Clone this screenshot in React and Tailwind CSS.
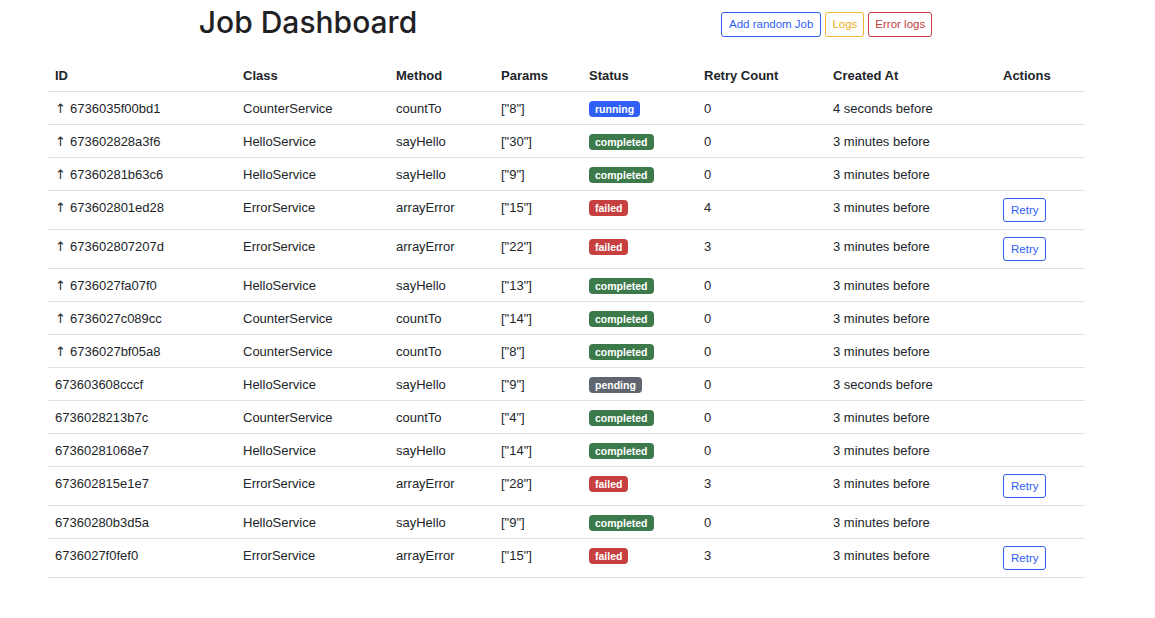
const jobs = [
  { id: "6736035f00bd1", up: true, cls: "CounterService", method: "countTo", params: '["8"]', status: "running", retry: 0, created: "4 seconds before" },
  { id: "673602828a3f6", up: true, cls: "HelloService", method: "sayHello", params: '["30"]', status: "completed", retry: 0, created: "3 minutes before" },
  { id: "67360281b63c6", up: true, cls: "HelloService", method: "sayHello", params: '["9"]', status: "completed", retry: 0, created: "3 minutes before" },
  { id: "673602801ed28", up: true, cls: "ErrorService", method: "arrayError", params: '["15"]', status: "failed", retry: 4, created: "3 minutes before" },
  { id: "673602807207d", up: true, cls: "ErrorService", method: "arrayError", params: '["22"]', status: "failed", retry: 3, created: "3 minutes before" },
  { id: "6736027fa07f0", up: true, cls: "HelloService", method: "sayHello", params: '["13"]', status: "completed", retry: 0, created: "3 minutes before" },
  { id: "6736027c089cc", up: true, cls: "CounterService", method: "countTo", params: '["14"]', status: "completed", retry: 0, created: "3 minutes before" },
  { id: "6736027bf05a8", up: true, cls: "CounterService", method: "countTo", params: '["8"]', status: "completed", retry: 0, created: "3 minutes before" },
  { id: "673603608cccf", up: false, cls: "HelloService", method: "sayHello", params: '["9"]', status: "pending", retry: 0, created: "3 seconds before" },
  { id: "6736028213b7c", up: false, cls: "CounterService", method: "countTo", params: '["4"]', status: "completed", retry: 0, created: "3 minutes before" },
  { id: "67360281068e7", up: false, cls: "HelloService", method: "sayHello", params: '["14"]', status: "completed", retry: 0, created: "3 minutes before" },
  { id: "673602815e1e7", up: false, cls: "ErrorService", method: "arrayError", params: '["28"]', status: "failed", retry: 3, created: "3 minutes before" },
  { id: "67360280b3d5a", up: false, cls: "HelloService", method: "sayHello", params: '["9"]', status: "completed", retry: 0, created: "3 minutes before" },
  { id: "6736027f0fef0", up: false, cls: "ErrorService", method: "arrayError", params: '["15"]', status: "failed", retry: 3, created: "3 minutes before" },
];

const badgeColors = {
  running: "bg-[#2f5ff5]",
  completed: "bg-[#3c7a4c]",
  failed: "bg-[#c5403f]",
  pending: "bg-[#5f6670]",
};

const StatusBadge = ({ status }) => (
  <div className="h-[17px] flex items-center">
    <span
      className={`block rounded-[4px] px-[6px] h-[16px] leading-[16px] text-[10.5px] font-bold text-white ${badgeColors[status]}`}
    >
      {status}
    </span>
  </div>
);

const headers = [
  ["ID", "w-[188px]"],
  ["Class", "w-[153px]"],
  ["Method", "w-[105px]"],
  ["Params", "w-[88px]"],
  ["Status", "w-[115px]"],
  ["Retry Count", "w-[129px]"],
  ["Created At", "w-[170px]"],
  ["Actions", "w-[89px]"],
];

const base = "px-[7px] align-top border-b border-[#dee2e6]";
const cell = `${base} pt-2 pb-[7px]`;

export default function App() {
  return (
    <div className="bg-white min-h-[618px] text-[#212529] text-[13px] leading-[17px] font-['Liberation_Sans',Arial,sans-serif]">
      {/* Header */}
      <div className="flex items-start h-[59px]">
        <div className="w-[616px] flex justify-center">
          <h1 className="text-[30px] leading-[38px] font-medium mt-[3px] text-[#1f2125] font-['Inter',sans-serif]">
            Job Dashboard
          </h1>
        </div>
        <div className="flex gap-1 mt-3 ml-[105px] text-[11.5px] leading-[23px]">
          <button className="border border-[#2f5ff5] text-[#2f5ff5] rounded-[3px] px-[7px] h-[25px]">
            Add random Job
          </button>
          <button className="border border-[#f2b531] text-[#eeae1c] rounded-[3px] px-[6px] h-[25px]">
            Logs
          </button>
          <button className="border border-[#c5403f] text-[#c5403f] rounded-[3px] px-[6px] h-[25px]">
            Error logs
          </button>
        </div>
      </div>

      {/* Table */}
      <div className="pl-[48px]">
        <table className="w-[1037px] border-collapse table-fixed">
          <thead>
            <tr>
              {headers.map(([h, w]) => (
                <th key={h} className={`${base} pt-2 pb-[7px] ${w} text-left font-bold`}>
                  {h}
                </th>
              ))}
            </tr>
          </thead>
          <tbody>
            {jobs.map((job) => (
              <tr key={job.id}>
                <td className={cell}>
                  {job.up && (
                    <span className="font-['DejaVu_Sans',sans-serif] text-[13px]">↑ </span>
                  )}
                  {job.id}
                </td>
                <td className={cell}>{job.cls}</td>
                <td className={cell}>{job.method}</td>
                <td className={cell}>{job.params}</td>
                <td className={cell}>
                  <StatusBadge status={job.status} />
                </td>
                <td className={cell}>{job.retry}</td>
                <td className={cell}>{job.created}</td>
                <td className={`${base} pt-[7px] pb-[7px]`}>
                  {job.status === "failed" && (
                    <button className="block border border-[#2f5ff5] text-[#2f5ff5] rounded-[3px] px-[7px] h-[24px] text-[11.5px] leading-[22px]">
                      Retry
                    </button>
                  )}
                </td>
              </tr>
            ))}
          </tbody>
        </table>
      </div>
    </div>
  );
}
